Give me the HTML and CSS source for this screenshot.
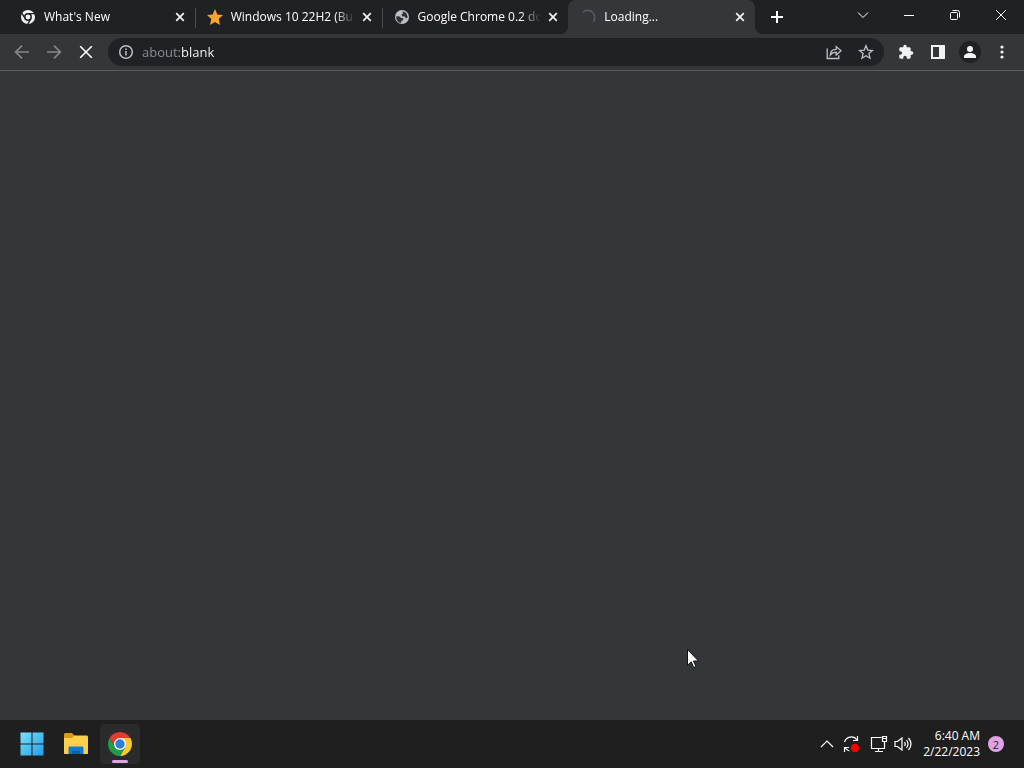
FILE: index.html
```html
<!DOCTYPE html>
<html lang="en">
<head>
  <meta charset="UTF-8">
  <meta name="viewport" content="width=device-width, initial-scale=1">
  <title>Loading...</title>
  <link rel="stylesheet" href="styles.css">
</head>
<body>
  <header class="tabstrip">
    <div class="tabs">
      <div class="tab">
        <svg class="favicon" viewBox="0 0 16 16">
          <circle cx="8" cy="8" r="7" fill="#f1f3f4"/>
          <circle cx="8" cy="8" r="3.2" fill="#f1f3f4" stroke="#202124" stroke-width="1.5"/>
          <path d="M8 4.6h6.4M5.1 9.7 1.9 4.2M10.9 9.7 7.7 15.2" stroke="#202124" stroke-width="1.3"/>
        </svg>
        <span class="title">What's New</span>
        <button class="close" aria-label="Close tab"><svg viewBox="0 0 16 16"><path d="M4.2 4.2l7.6 7.6M11.8 4.2l-7.6 7.6"/></svg></button>
      </div>
      <div class="tab">
        <svg class="favicon" viewBox="0 0 16 16">
          <path d="M8 0l2.3 5.4 5.7.6-4.3 3.9L13 16l-5-3.1L3 16l1.3-6.1L0 6l5.7-.6z" fill="#fba52c"/>
        </svg>
        <span class="title">Windows 10 22H2 (Buil</span>
        <button class="close" aria-label="Close tab"><svg viewBox="0 0 16 16"><path d="M4.2 4.2l7.6 7.6M11.8 4.2l-7.6 7.6"/></svg></button>
      </div>
      <div class="tab">
        <svg class="favicon" viewBox="0 0 16 16">
          <circle cx="8" cy="8" r="7" fill="#bdc1c6"/>
          <path d="M2.2 7.2l3.6.3 1.4 1.6h2v2.2l-2 .6v2.2C4 13.6 2 11 2.2 7.2zM8.2 2.3l4 1.5 1.6 4.4-1.6 1.2-1.6-1.8-2.3-.2-1-1.8 1.8-1.2z" fill="#303134"/>
        </svg>
        <span class="title">Google Chrome 0.2 do</span>
        <button class="close" aria-label="Close tab"><svg viewBox="0 0 16 16"><path d="M4.2 4.2l7.6 7.6M11.8 4.2l-7.6 7.6"/></svg></button>
      </div>
      <div class="tab active">
        <svg class="favicon" viewBox="0 0 16 16">
          <path d="M3 3.2A7 7 0 0 1 13.3 12.6" fill="none" stroke="#565d69" stroke-width="1.5"/>
        </svg>
        <span class="title">Loading...</span>
        <button class="close" aria-label="Close tab"><svg viewBox="0 0 16 16"><path d="M4.2 4.2l7.6 7.6M11.8 4.2l-7.6 7.6"/></svg></button>
      </div>
    </div>
    <button class="new-tab" aria-label="New tab"><svg viewBox="0 0 16 16"><path d="M8 2v12M2 8h12"/></svg></button>
    <div class="window-controls">
      <button aria-label="Search tabs"><svg viewBox="0 0 12 12"><path d="M1 3.5l5 5 5-5"/></svg></button>
      <button aria-label="Minimize"><svg viewBox="0 0 12 12"><path d="M1 6.5h10"/></svg></button>
      <button aria-label="Restore"><svg viewBox="0 0 12 12"><rect x="1.5" y="3.5" width="7" height="7" rx="1"/><path d="M3.5 1.5h5a2 2 0 0 1 2 2v5"/></svg></button>
      <button aria-label="Close"><svg viewBox="0 0 12 12"><path d="M1 1l10 10M11 1 1 11"/></svg></button>
    </div>
  </header>

  <nav class="toolbar">
    <button class="tool dim" aria-label="Back"><svg viewBox="0 0 16 16"><path d="M15 8H2M8 1.6 1.6 8 8 14.4"/></svg></button>
    <button class="tool dim" aria-label="Forward"><svg viewBox="0 0 16 16"><path d="M1 8h13M8 1.6 14.4 8 8 14.4"/></svg></button>
    <button class="tool" aria-label="Stop"><svg viewBox="0 0 16 16"><path d="M2.2 2.2l11.6 11.6M13.8 2.2 2.2 13.8"/></svg></button>
    <div class="omnibox">
      <svg class="info" viewBox="0 0 16 16"><circle cx="8" cy="8" r="6.3"/><path d="M8 7v4.4M8 4.4V6"/></svg>
      <input class="address" type="text" value="about:blank" aria-label="Address" spellcheck="false">
      <button class="tool grey" aria-label="Share"><svg viewBox="0 0 16 16"><path d="M1.2 4.5v10h11.6v-3.2M4.2 11.2c.2-4 2.4-5.8 6-5.8V2.6l4.8 4.2-4.8 4.2V8.2c-2.6 0-4.4.8-6 3z"/></svg></button>
      <button class="tool grey" aria-label="Bookmark"><svg viewBox="0 0 16 16"><path d="M8 1.8l1.8 4.3 4.7.4-3.6 3.1 1.1 4.6L8 11.8l-4 2.4 1.1-4.6-3.6-3.1 4.7-.4z"/></svg></button>
    </div>
    <button class="tool solid" aria-label="Extensions"><svg viewBox="0 0 24 24"><path d="M20.5 11H19V7c0-1.1-.9-2-2-2h-4V3.5a2.5 2.5 0 0 0-5 0V5H4c-1.1 0-2 .9-2 2v3.8h1.5a2.7 2.7 0 0 1 0 5.4H2V20c0 1.1.9 2 2 2h3.8v-1.5a2.7 2.7 0 0 1 5.4 0V22H17c1.100 0 2-.9 2-2v-4h1.500a2.5 2.5 0 0 0 0-5z"/></svg></button>
    <button class="tool solid" aria-label="Side panel"><svg viewBox="0 0 16 16"><path fill-rule="evenodd" d="M1 1h14v14H1zM3 3v10h6V3z"/></svg></button>
    <button class="tool solid profile" aria-label="Profile"><svg viewBox="0 0 16 16"><circle cx="8" cy="5" r="3"/><path d="M2 14v-1.5c0-2.200 3-3.500 6-3.500s6 1.300 6 3.500V14z"/></svg></button>
    <button class="tool solid" aria-label="Menu"><svg viewBox="0 0 16 16"><circle cx="8" cy="3" r="1.6"/><circle cx="8" cy="8" r="1.6"/><circle cx="8" cy="13" r="1.6"/></svg></button>
  </nav>

  <main class="page"></main>

  <footer class="taskbar">
    <div class="apps">
      <button class="app" aria-label="Start">
        <svg viewBox="0 0 24 24">
          <defs>
            <linearGradient id="win" x1="0" y1="0" x2="24" y2="24" gradientUnits="userSpaceOnUse">
              <stop offset="0" stop-color="#7be3fc"/>
              <stop offset="1" stop-color="#1f9de8"/>
            </linearGradient>
          </defs>
          <path d="M.5.5h11v11H.5zM12.500.5h11v11h-11zM.5 12.500h11v11H.5zM12.500 12.500h11v11h-11z" fill="url(#win)"/>
        </svg>
      </button>
      <button class="app" aria-label="File Explorer">
        <svg viewBox="0 0 24 24">
          <path d="M0 2.500C0 1.600.6 1 1.500 1H8l2.500 2.500V9H0z" fill="#d99a14"/>
          <path d="M0 6h8l2.500-2.500h12c.9 0 1.500.6 1.500 1.500v16c0 .6-.4 1-1 1H1c-.6 0-1-.4-1-1z" fill="#fcd04d"/>
          <path d="M4.500 22v-6c0-1 .7-1.500 1.500-1.500h12c.9 0 1.500.6 1.500 1.500v6z" fill="#1479c9"/>
          <path d="M8 22v-3h8v3z" fill="#0d5ea6"/>
        </svg>
      </button>
      <button class="app running" aria-label="Google Chrome">
        <svg viewBox="0 0 24 24">
          <path d="M1.610 6a12 12 0 0 1 20.780 0H12l-5.200 9z" fill="#e33b2e"/>
          <path d="M12 6h10.390A12 12 0 0 1 12 24l5.200-9z" fill="#fcc934"/>
          <path d="M1.610 6A12 12 0 0 0 12 24l5.200-9H6.800z" fill="#1e9e49"/>
          <circle cx="12" cy="12" r="6" fill="#fff"/>
          <circle cx="12" cy="12" r="4.700" fill="#2f7de1"/>
        </svg>
      </button>
    </div>
    <div class="tray">
      <button class="tray-button" aria-label="Show hidden icons"><svg viewBox="0 0 16 16"><path d="M2 11l6-6 6 6"/></svg></button>
      <button class="tray-button" aria-label="Windows Update">
        <svg viewBox="0 0 18 18">
          <path d="M2.5 7A7 7 0 0 1 15 5M15.500 1v4.500H11M7.500 16A7 7 0 0 1 3 12.500M2.500 17v-4.500H7"/>
          <circle cx="13" cy="13" r="4.200" fill="#f80000" stroke="none"/>
        </svg>
      </button>
      <button class="tray-button network" aria-label="Network"><svg viewBox="0 0 18 18"><path d="M11.500 2.500h-10v11h13V10M5 16.500h8M8.500 13.500v3M12.500 1.500h4v5h-4zM14.500 6.500v7M12.500 3.500h4"/></svg></button>
      <button class="tray-button" aria-label="Volume"><svg viewBox="0 0 18 18"><path d="M1 6.500h2.500L8 3v12l-4.500-3.500H1zM10.500 7q1.500 2 0 4M12.500 5q3 4 0 8M14.500 3q5 6 0 12"/></svg></button>
      <div class="clock">
        <time>6:40 AM</time>
        <time>2/22/2023</time>
      </div>
      <button class="badge" aria-label="Notifications">2</button>
    </div>
  </footer>

  <svg class="cursor" viewBox="0 0 12 19"><path d="M.5.5v15.800l3.700-3.500 2.500 5.700 2.300-1-2.500-5.500h5z" fill="#fff" stroke="#111"/></svg>
</body>
</html>
```
FILE: styles.css
```css
* {
  box-sizing: border-box;
}
body {
  margin: 0;
  height: 100vh;
  display: flex;
  flex-direction: column;
  overflow: hidden;
  background: #35363a;
  color: #fff;
  font-family: "Segoe UI", "Open Sans", sans-serif;
  font-size: 12px;
}
button {
  display: flex;
  align-items: center;
  justify-content: center;
  flex-shrink: 0;
  padding: 0;
  border: none;
  background: none;
  color: inherit;
  font: inherit;
}
svg {
  display: block;
  flex-shrink: 0;
  fill: none;
  stroke: none;
}
button svg {
  width: 16px;
  height: 16px;
}

/* Tab strip */
.tabstrip {
  display: flex;
  height: 34px;
  padding-left: 8px;
  background: #202124;
}
.tabs {
  display: flex;
  flex: 0 1 747px;
  min-width: 0;
}
.tab {
  display: flex;
  align-items: center;
  flex: 1;
  min-width: 0;
  padding: 0 7px 0 12px;
  position: relative;
}
.tab + .tab:not(.active)::before {
  content: "";
  position: absolute;
  left: 0;
  top: 8px;
  width: 1px;
  height: 20px;
  background: #4c4d51;
}
.tab.active {
  background: #35363a;
  border-radius: 8px 8px 0 0;
}
/* Curved feet of the active tab */
.tab.active::before,
.tab.active::after {
  content: "";
  position: absolute;
  bottom: 0;
  width: 8px;
  height: 8px;
}
.tab.active::before {
  left: -8px;
  background: radial-gradient(circle at 0 0, transparent 8px, #35363a 8px);
}
.tab.active::after {
  right: -8px;
  background: radial-gradient(circle at 100% 0, transparent 8px, #35363a 8px);
}
.favicon {
  width: 16px;
  height: 16px;
  margin-right: 8px;
}
.title {
  flex: 1;
  overflow: hidden;
  white-space: nowrap;
  line-height: 16px;
  margin-right: 4px;
  -webkit-mask-image: linear-gradient(to left, transparent, #000 20px);
  mask-image: linear-gradient(to left, transparent, #000 20px);
}
.close svg {
  stroke: #f1f3f4;
  stroke-width: 1.7;
}
.new-tab {
  width: 28px;
  margin-left: 8px;
}
.new-tab svg {
  stroke: #fff;
  stroke-width: 2;
}
.window-controls {
  display: flex;
  height: 29px;
  margin-left: auto;
}
.window-controls button {
  width: 46px;
}
.window-controls svg {
  width: 12px;
  height: 12px;
  stroke: #fff;
}

/* Toolbar */
.toolbar {
  display: flex;
  align-items: center;
  gap: 4px;
  height: 37px;
  padding: 0 8px;
  border-bottom: 1px solid #5b5c60;
}
.tool {
  width: 28px;
  height: 28px;
  border-radius: 14px;
}
.tool svg {
  stroke: #fff;
  stroke-width: 1.6;
}
.tool.dim svg {
  stroke: #87888b;
}
.tool.grey svg {
  stroke: #bdc1c6;
  stroke-width: 1.3;
}
.tool.solid svg {
  fill: #f1f3f4;
  stroke: none;
}
.tool.profile {
  width: 22px;
  height: 22px;
  margin: 0 3px;
  background: #202124;
}
.omnibox {
  display: flex;
  align-items: center;
  gap: 4px;
  flex: 1;
  min-width: 0;
  height: 28px;
  margin: 0 4px;
  padding: 0 4px 0 10px;
  border-radius: 14px;
  background: #202124;
}
.info {
  width: 16px;
  height: 16px;
  stroke: #bdc1c6;
  stroke-width: 1.5;
}
.address {
  flex: 1;
  min-width: 0;
  height: 20px;
  margin: 0;
  padding: 0 0 0 4px;
  border: none;
  outline: none;
  font: 13px "Segoe UI", "Open Sans", sans-serif;
  /* grey scheme, white host */
  background: linear-gradient(to right, #8d9196 43px, #fff 43px);
  -webkit-background-clip: text;
  background-clip: text;
  color: transparent;
}

.page {
  flex: 1;
}

/* Taskbar */
.taskbar {
  display: flex;
  align-items: center;
  justify-content: space-between;
  height: 48px;
  padding: 0 20px 0 12px;
  background: #1f1f1f;
}
.apps {
  display: flex;
  gap: 4px;
}
.app {
  width: 40px;
  height: 40px;
  border-radius: 4px;
  position: relative;
}
.app svg {
  width: 24px;
  height: 24px;
}
.app.running {
  background: #2b2b2b;
}
.app.running::after {
  content: "";
  position: absolute;
  bottom: 1px;
  left: 50%;
  width: 16px;
  height: 3px;
  margin-left: -8px;
  border-radius: 2px;
  background: #dda3e3;
}
.tray {
  display: flex;
  align-items: center;
}
.tray-button {
  width: 24px;
  height: 24px;
}
.tray-button svg {
  width: 18px;
  height: 18px;
  stroke: #fff;
  stroke-width: 1.2;
}
.tray-button:first-child svg {
  width: 16px;
  height: 16px;
}
.network {
  margin-left: 4px;
}
.clock {
  display: flex;
  flex-direction: column;
  align-items: flex-end;
  margin: 0 8px;
  line-height: 16px;
}
.badge {
  width: 16px;
  height: 16px;
  border-radius: 8px;
  background: #dda3e3;
  color: #1f1f1f;
  font-size: 11px;
}

.cursor {
  position: absolute;
  left: 687px;
  top: 649px;
  width: 12px;
  height: 19px;
}
```
